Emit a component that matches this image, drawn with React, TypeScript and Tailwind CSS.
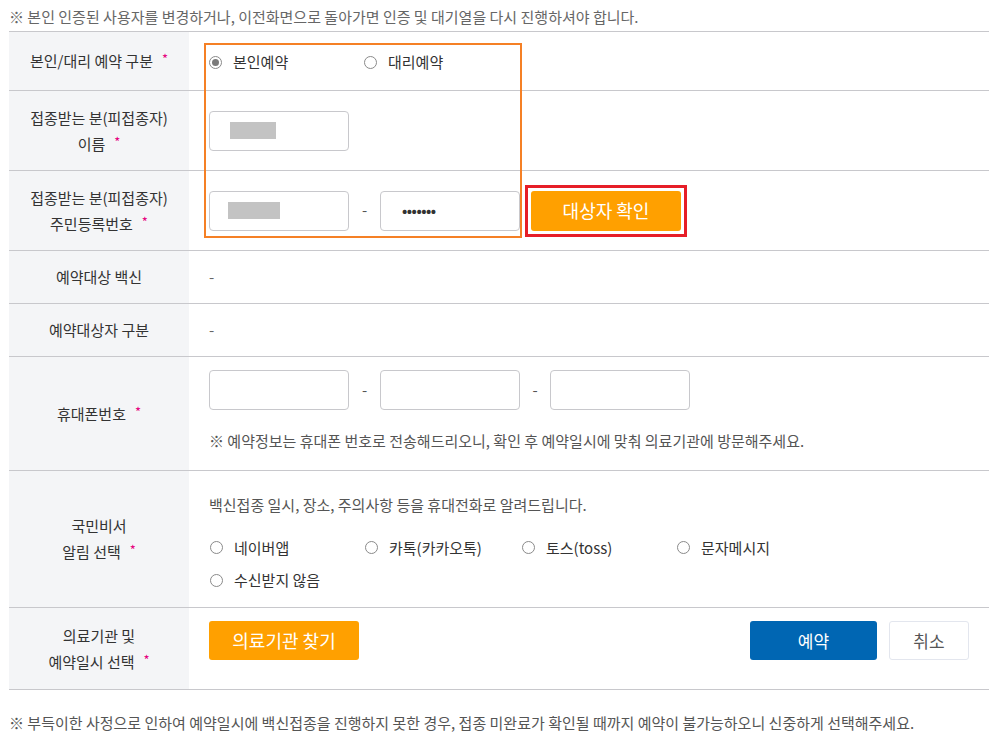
import React from "react";

const font = { fontFamily: '"Noto Sans CJK KR", "Noto Sans", sans-serif' };

function Star() {
  return <span className="ml-[9px] text-[13px] text-[#e6007e] align-top relative top-[-2px]">*</span>;
}

function Radio({ checked, label, w }: { checked?: boolean; label: string; w?: string }) {
  return (
    <label className={`flex items-center ${w ?? ""}`}>
      <span className="w-[13px] h-[13px] rounded-full border border-[#8a8a8a] bg-white flex items-center justify-center">
        {checked && <span className="w-[7px] h-[7px] rounded-full bg-[#7a7a7a]" />}
      </span>
      <span className="ml-[11px] text-[15px] text-[#333]">{label}</span>
    </label>
  );
}

function Input({ children }: { children?: React.ReactNode }) {
  return (
    <div className="w-[140px] h-[40px] rounded-[4px] border border-[#c8c8cc] bg-white flex items-center">{children}</div>
  );
}

function Row({ h, label, children, cls }: { h: string; label: React.ReactNode; children: React.ReactNode; cls?: string }) {
  return (
    <div className={`flex border-b border-[#c8c8cc] ${h}`}>
      <div className="w-[180px] shrink-0 bg-[#f4f5f7] flex flex-col items-center justify-center text-[15px] text-[#333] leading-[26px] text-center">
        {label}
      </div>
      <div className={`flex-1 pl-[20px] ${cls ?? "flex items-center"}`}>{children}</div>
    </div>
  );
}

export default function App() {
  return (
    <div style={font} className="w-[998px] h-[744px] bg-white relative">
      <div className="pl-[9px] h-[31px] flex items-center pt-[3px] text-[15px] text-[#666]">
        ※ 본인 인증된 사용자를 변경하거나, 이전화면으로 돌아가면 인증 및 대기열을 다시 진행하셔야 합니다.
      </div>
      <div className="mx-[9px] border-t border-[#c8c8cc] relative">
        <Row h="h-[59px]" label={<span>본인/대리 예약 구분<Star /></span>}>
          <div className="flex items-center pt-[2px]">
            <Radio checked label="본인예약" w="w-[155px]" />
            <Radio label="대리예약" />
          </div>
        </Row>
        <Row h="h-[80px]" label={<><span>접종받는 분(피접종자)</span><span>이름<Star /></span></>}>
          <Input>
            <span className="ml-[20px] w-[46px] h-[17px] bg-[#c3c3c3]" />
          </Input>
        </Row>
        <Row h="h-[80px]" label={<><span>접종받는 분(피접종자)</span><span>주민등록번호<Star /></span></>}>
          <Input>
            <span className="ml-[18px] w-[52px] h-[17px] bg-[#c3c3c3]" />
          </Input>
          <span className="w-[31px] text-center text-[15px] text-[#555]">-</span>
          <Input>
            <span className="ml-[21px] text-[14px] font-bold text-[#333] tracking-[-0.5px]">•••••••</span>
          </Input>
          <div className="ml-[5px] border-[3px] border-[#e61e28] p-[3px] bg-white">
            <button className="w-[150px] h-[40px] rounded-[3px] bg-[#ffa000] text-white text-[18px]">대상자 확인</button>
          </div>
        </Row>
        <Row h="h-[53px]" label="예약대상 백신">
          <span className="text-[15px] text-[#666]">-</span>
        </Row>
        <Row h="h-[53px]" label="예약대상자 구분">
          <span className="text-[15px] text-[#666]">-</span>
        </Row>
        <Row h="h-[114px]" label={<span>휴대폰번호<Star /></span>} cls="flex flex-col pt-[13px]">
          <div className="flex items-center">
            <Input />
            <span className="w-[31px] text-center text-[15px] text-[#555]">-</span>
            <Input />
            <span className="w-[30px] text-center text-[15px] text-[#555]">-</span>
            <Input />
          </div>
          <div className="mt-[20px] text-[15px] text-[#555]">
            ※ 예약정보는 휴대폰 번호로 전송해드리오니, 확인 후 예약일시에 맞춰 의료기관에 방문해주세요.
          </div>
        </Row>
        <Row h="h-[137px]" label={<><span>국민비서</span><span>알림 선택<Star /></span></>} cls="flex flex-col pt-[23px] pl-[9px]">
          <div className="text-[15px] text-[#555] mb-[20px]">백신접종 일시, 장소, 주의사항 등을 휴대전화로 알려드립니다.</div>
          <div className="flex items-center pl-[1px]">
            <Radio label="네이버앱" w="w-[155px]" />
            <Radio label="카톡(카카오톡)" w="w-[157px]" />
            <Radio label="토스(toss)" w="w-[155px]" />
            <Radio label="문자메시지" />
          </div>
          <div className="flex items-center pl-[1px] mt-[10px]">
            <Radio label="수신받지 않음" />
          </div>
        </Row>
        <Row h="h-[82px]" label={<><span>의료기관 및</span><span>예약일시 선택<Star /></span></>} cls="flex items-start pt-[13px]">
          <button className="w-[150px] h-[39px] rounded-[3px] bg-[#ffa000] text-white text-[18px]">의료기관 찾기</button>
          <div className="flex-1" />
          <button className="w-[127px] h-[39px] rounded-[3px] bg-[#0066b3] text-white text-[17px]">예약</button>
          <button className="ml-[12px] w-[80px] h-[39px] rounded-[3px] border border-[#e3e6ee] bg-white text-[#555] text-[17px]">취소</button>
          <div className="w-[20px]" />
        </Row>
        <div className="absolute left-[195px] top-[11px] w-[318px] h-[195px] border-2 border-[#f58025] pointer-events-none" />
      </div>
      <div className="pl-[9px] mt-[22px] text-[15px] text-[#555]">
        ※ 부득이한 사정으로 인하여 예약일시에 백신접종을 진행하지 못한 경우, 접종 미완료가 확인될 때까지 예약이 불가능하오니 신중하게 선택해주세요.
      </div>
    </div>
  );
}
